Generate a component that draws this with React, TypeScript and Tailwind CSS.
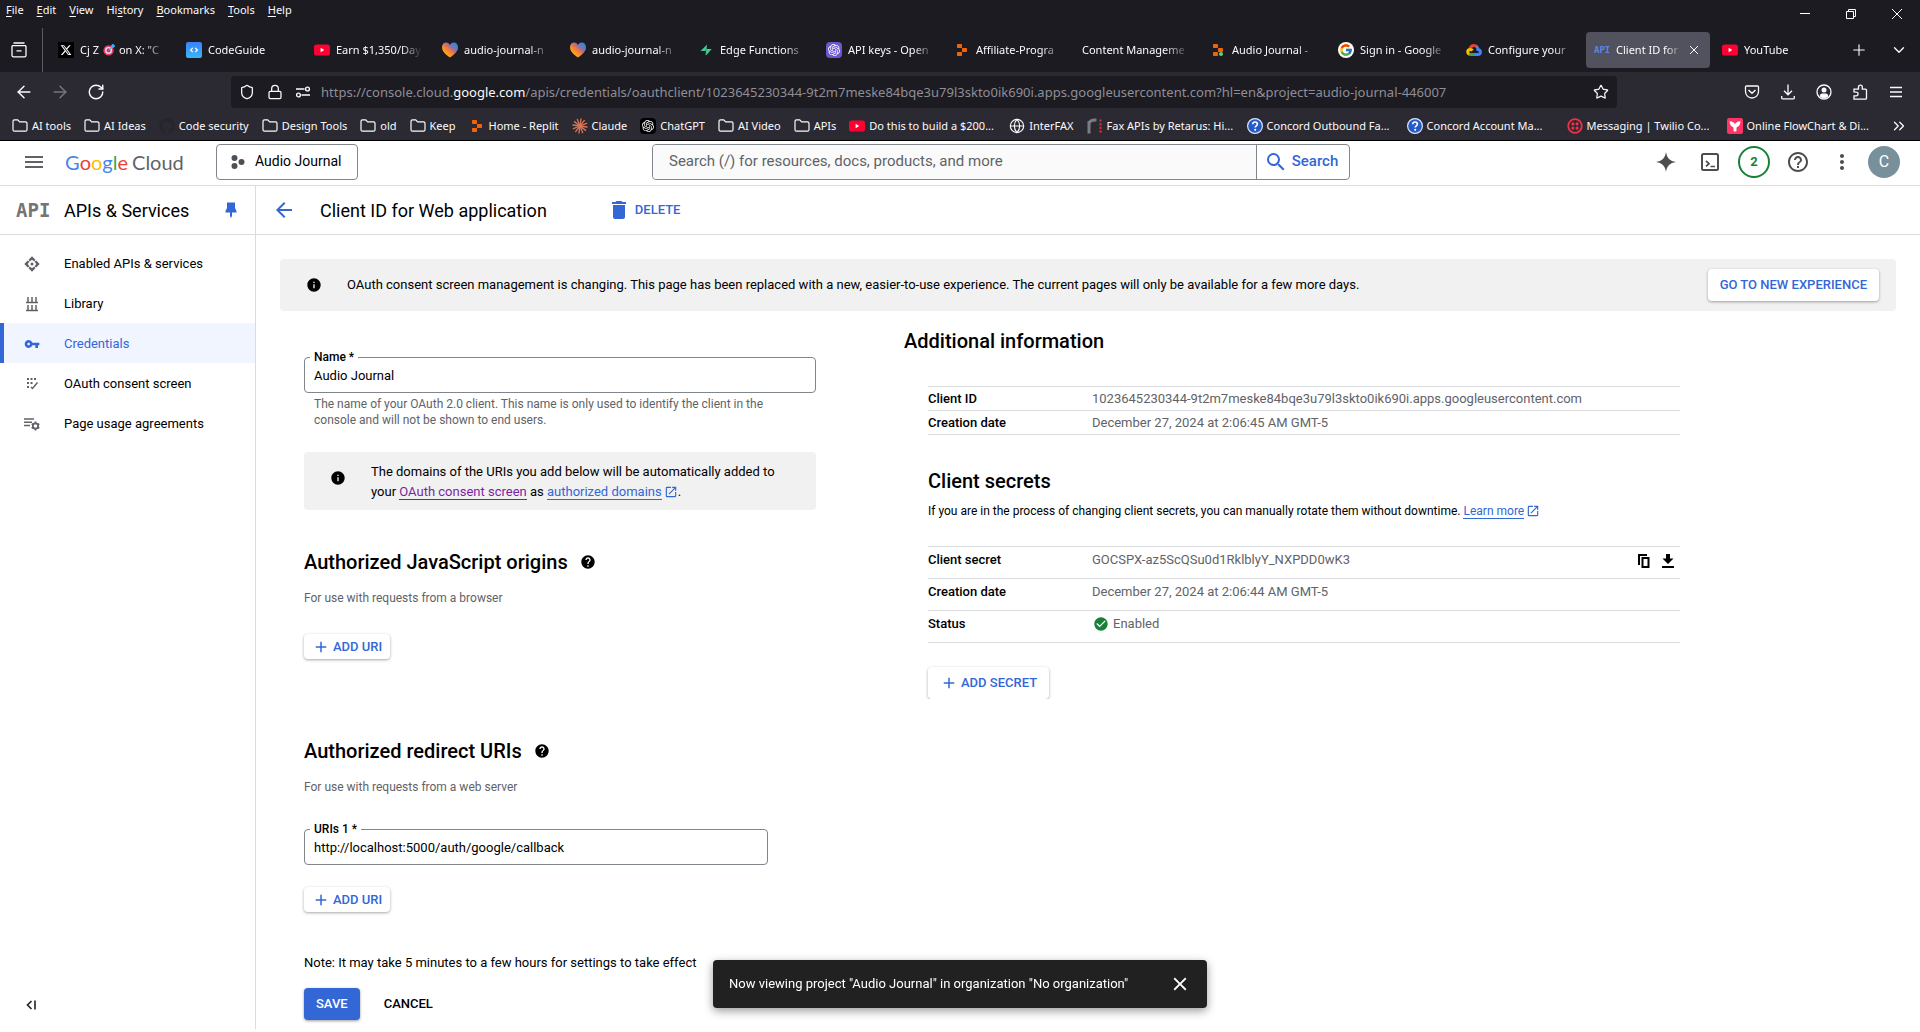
import React from 'react';
import { MdAdd, MdArrowBack, MdCheckCircle, MdClose, MdDelete, MdHelp, MdHelpOutline, MdInfo, MdMenu, MdMoreVert, MdOpenInNew, MdSearch, MdVpnKey } from 'react-icons/md';
import { FcGoogle } from 'react-icons/fc';
import { FaXTwitter } from 'react-icons/fa6';
import { FaGithub } from 'react-icons/fa';
import { SiOpenai, SiReplit } from 'react-icons/si';
import { ArrowLeft, ArrowRight, ChevronDown, ChevronsRight, Globe, Lock, Plus, RotateCw, Shield, Star } from 'lucide-react';

const chromeFont = "font-['Noto_Sans','Open_Sans',sans-serif]";
const pageFont = "font-['Roboto','Liberation_Sans',sans-serif]";

/* ---------- Favicons ---------- */

function YoutubeIcon() {
  return (
    <svg viewBox="0 0 16 16" className="size-4 shrink-0">
      <rect x="0" y="2.5" width="16" height="11" rx="2.6" fill="#ff0033" />
      <path d="M6.6 5.8v4.4L10.3 8z" fill="#fff" />
    </svg>
  );
}

function XIcon() {
  return (
    <span className="flex size-4 shrink-0 items-center justify-center bg-black">
      <FaXTwitter className="size-3 text-white" />
    </span>
  );
}

function CodeGuideIcon() {
  return (
    <svg viewBox="0 0 16 16" className="size-4 shrink-0">
      <defs>
        <linearGradient id="cg" x1="0" y1="0" x2="0" y2="1">
          <stop offset="0" stopColor="#3b82f6" />
          <stop offset="1" stopColor="#38b6f8" />
        </linearGradient>
      </defs>
      <rect width="16" height="16" rx="2" fill="url(#cg)" />
      <path d="M6.8 5.8 4.6 8l2.2 2.2M9.2 5.8 11.4 8l-2.2 2.2" fill="none" stroke="#fff" strokeWidth="1.2" />
    </svg>
  );
}

function HeartIcon() {
  return (
    <svg viewBox="0 0 16 16" className="size-4 shrink-0">
      <defs>
        <linearGradient id="heart" x1="0.1" y1="0.9" x2="0.85" y2="0.1">
          <stop offset="0.2" stopColor="#ffa51f" />
          <stop offset="0.5" stopColor="#f0763f" />
          <stop offset="0.72" stopColor="#8d6fa8" />
          <stop offset="1" stopColor="#2b8ad6" />
        </linearGradient>
      </defs>
      <path d="M8 15.6C3 12 0 9 0 5.2 0 2.5 1.900.6 4.300.6 6 .6 7.300 1.500 8 3 8.700 1.500 10 .6 11.700.6 14.100.6 16 2.500 16 5.200 16 9 13 12 8 15.600z" fill="url(#heart)" />
    </svg>
  );
}

function BoltIcon() {
  return (
    <svg viewBox="0 0 16 16" className="size-4 shrink-0">
      <path d="M9.200 2.500 2.500 9h5z" fill="#3ecf8e" />
      <path d="M7 13.500 13.600 7H8.500z" fill="#249361" />
      <path d="M8.600 2.500 8 13.500l5.600-6.500H9z" fill="#3ecf8e" />
    </svg>
  );
}

function OpenAiIcon({ dark = false }: { dark?: boolean }) {
  return (
    <span className={'flex size-4 shrink-0 items-center justify-center rounded ' + (dark ? 'bg-black' : 'bg-[#6e56cf]')}>
      <SiOpenai className="size-3 text-white" />
    </span>
  );
}

function ReplitIcon({ dot = false }: { dot?: boolean }) {
  if (!dot) return <span className="flex size-4 shrink-0 items-center justify-center"><SiReplit className="size-3 text-[#f26207]" /></span>;
  return (
    <svg viewBox="0 0 16 16" className="size-4 shrink-0">
      <rect x="3" y="2" width="5" height="4" rx="0.8" fill="#f26207" />
      <rect x="8" y="6" width="5" height="4" rx="0.8" fill="#f26207" />
      <rect x="3" y="10" width="5" height="4" rx="0.8" fill="#f26207" />
      <circle cx="11" cy="12" r="2" fill="#5bd66f" />
    </svg>
  );
}

function GoogleIcon() {
  return (
    <span className="flex size-4 shrink-0 items-center justify-center rounded-full bg-white">
      <FcGoogle className="size-3.5" />
    </span>
  );
}

function GcpIcon() {
  return (
    <svg viewBox="0 0 16 16" className="size-4 shrink-0" fill="none" strokeWidth="3">
      <path d="M4.200 6.200C4.800 4.300 6.300 3.400 8 3.400c1.200 0 2.200.5 3 1.300" stroke="#ea4335" />
      <path d="M10.600 4.500c.9.800 1.300 1.800 1.300 3 1.600.2 2.500 1.300 2.500 2.500 0 1.500-1.100 2.500-2.500 2.500H8" stroke="#4285f4" />
      <path d="M8.200 12.500H4.600c-.7 0-1.300-.2-1.800-.6" stroke="#34a853" />
      <path d="M3.200 12.200C2.200 11.700 1.700 11 1.700 10c0-1.600 1.200-2.500 2.700-2.500 1 0 1.700.4 2.200 1" stroke="#fbbc05" />
    </svg>
  );
}

function ApiTabIcon() {
  return <span className="w-4 shrink-0 font-['DejaVu_Sans_Mono',monospace] text-[9px] leading-4 font-bold text-[#5a86e8]">API</span>;
}

function FolderIcon() {
  return (
    <svg viewBox="0 0 16 16" className="size-4 shrink-0" fill="none" stroke="#fbfbfe" strokeWidth="1.200">
      <path d="M1 3.300c0-.9.600-1.500 1.500-1.500h3.200l2 2h5.800c.9 0 1.500.600 1.500 1.500v6.400c0 .9-.600 1.500-1.500 1.500h-11c-.9 0-1.500-.600-1.500-1.500z" />
    </svg>
  );
}

function ClaudeIcon() {
  const rays = [0, 30, 60, 90, 120, 150, 180, 210, 240, 270, 300, 330];
  return (
    <svg viewBox="0 0 16 16" className="size-4 shrink-0" stroke="#d97757" strokeWidth="1.300" strokeLinecap="round">
      {rays.map((a) => <path key={a} d="M8 8V0.900" transform={`rotate(${a + 8} 8 8)`} />)}
    </svg>
  );
}

function QuestionIcon() {
  return (
    <svg viewBox="0 0 16 16" className="size-4 shrink-0">
      <circle cx="8" cy="8" r="7.400" fill="#2359c9" stroke="#dbe6fb" strokeWidth="1.200" />
      <path d="M5.700 6.300C5.700 4.800 6.700 4 8 4s2.400.8 2.400 2.100c0 1.700-2.200 1.700-2.200 3.500" fill="none" stroke="#fff" strokeWidth="1.700" />
      <circle cx="8.200" cy="11.800" r="1.100" fill="#fff" />
    </svg>
  );
}

function TwilioIcon() {
  return (
    <svg viewBox="0 0 16 16" className="size-4 shrink-0">
      <circle cx="8" cy="8" r="6.800" fill="none" stroke="#f22f46" strokeWidth="1.800" />
      <circle cx="5.900" cy="5.900" r="1.600" fill="#f22f46" />
      <circle cx="10.100" cy="5.900" r="1.600" fill="#f22f46" />
      <circle cx="5.900" cy="10.100" r="1.600" fill="#f22f46" />
      <circle cx="10.100" cy="10.100" r="1.600" fill="#f22f46" />
    </svg>
  );
}

function FlowIcon() {
  return (
    <svg viewBox="0 0 16 16" className="size-4 shrink-0">
      <rect width="16" height="16" rx="2" fill="#ff3366" />
      <path d="M2.500 3.200c2.500 0 4.300 1 5.500 2.800 1.200-1.800 3-2.800 5.500-2.800 0 3-1.500 5.300-4 6.200V12.500c0 .6-.6 1-1.500 1s-1.500-.4-1.500-1V9.400c-2.500-.9-4-3.200-4-6.200z" fill="#fff" />
    </svg>
  );
}

function RetarusIcon() {
  return (
    <svg viewBox="0 0 16 16" className="size-4 shrink-0">
      <path d="M2 15.500V3M2 6.500C2 3 4.500 1.800 9.500 2" fill="none" stroke="#7b7b82" strokeWidth="3" />
      <circle cx="13.500" cy="2.500" r="1.300" fill="#c8283c" />
      <circle cx="13.500" cy="6.200" r="1.300" fill="#c8283c" />
      <circle cx="13.500" cy="9.900" r="1.300" fill="#c8283c" />
      <circle cx="13.500" cy="13.600" r="1.300" fill="#c8283c" />
    </svg>
  );
}

/* ---------- Browser chrome ---------- */

const menus: [string, string, string][] = [
  ['', 'F', 'ile'], ['', 'E', 'dit'], ['', 'V', 'iew'], ['Hi', 's', 'tory'], ['', 'B', 'ookmarks'], ['', 'T', 'ools'], ['', 'H', 'elp'],
];

function MenuBar() {
  return (
    <div className="flex h-7 items-start justify-between">
      <nav className="flex gap-px">
        {menus.map(([a, b, c]) => (
          <button key={b + c} className="px-1.5 text-[11px] leading-5">
            {a}<span className="underline underline-offset-2">{b}</span>{c}
          </button>
        ))}
      </nav>
      <div className="flex">
        <button aria-label="Minimize" className="flex h-7 w-[46px] items-center justify-center">
          <svg viewBox="0 0 10 10" className="size-2.5" stroke="#fff"><path d="M0 4.500h10" /></svg>
        </button>
        <button aria-label="Restore" className="flex h-7 w-[46px] items-center justify-center">
          <svg viewBox="0 0 10 10" className="size-2.5" stroke="#fff" fill="none"><path d="M.5 2.500h7v7h-7zM2.500 2.500v-2h7v7h-2" /></svg>
        </button>
        <button aria-label="Close window" className="flex h-7 w-[46px] items-center justify-center">
          <svg viewBox="0 0 10 10" className="size-2.5" stroke="#fff"><path d="M0 0l10 10M10 0 0 10" /></svg>
        </button>
      </div>
    </div>
  );
}

const tabs: { label: React.ReactNode; icon?: React.ReactNode; active?: boolean }[] = [
  {
    label: (
      <span className="inline-flex items-center gap-1">
        Cj Z
        <svg viewBox="0 0 14 14" className="size-3">
          <circle cx="6.500" cy="7.500" r="6" fill="#e0416b" />
          <circle cx="6.500" cy="7.500" r="4" fill="#f4dfe6" />
          <circle cx="6.500" cy="7.500" r="2.400" fill="#d8315b" />
          <path d="M6.500 7.500 10 4l0-2.500L12 0v2h2l-1.700 2H10" stroke="#35b7f1" fill="#35b7f1" />
        </svg>
        on X: "C
      </span>
    ),
    icon: <XIcon />,
  },
  { label: 'CodeGuide', icon: <CodeGuideIcon /> },
  { label: 'Earn $1,350/Day', icon: <YoutubeIcon /> },
  { label: 'audio-journal-n', icon: <HeartIcon /> },
  { label: 'audio-journal-n', icon: <HeartIcon /> },
  { label: 'Edge Functions', icon: <BoltIcon /> },
  { label: 'API keys - Open', icon: <OpenAiIcon /> },
  { label: 'Affiliate-Progra', icon: <ReplitIcon /> },
  { label: 'Content Manageme' },
  { label: 'Audio Journal -', icon: <ReplitIcon dot /> },
  { label: 'Sign in - Google', icon: <GoogleIcon /> },
  { label: 'Configure your', icon: <GcpIcon /> },
  { label: 'Client ID for', icon: <ApiTabIcon />, active: true },
  { label: 'YouTube', icon: <YoutubeIcon /> },
];

function TabStrip() {
  return (
    <div className="flex h-11 items-stretch">
      <div className="mr-[5px] flex w-[43px] shrink-0 items-center justify-center border-r border-[#5b5b66]">
        <button aria-label="Firefox View" className="pr-1">
          <svg viewBox="0 0 16 16" className="size-4" fill="none" stroke="#fbfbfe" strokeWidth="1.300">
            <path d="M2.500 1h11M1 3.700h14" />
            <path d="M1 3.700v9.600c0 .9.700 1.600 1.600 1.600h10.800c.9 0 1.600-.7 1.600-1.600V3.700M5.500 8.800h5" />
          </svg>
        </button>
      </div>
      <div className="flex min-w-0 flex-1">
        {tabs.map((t, i) => (
          <div key={i} className="flex w-32 min-w-0 items-center px-0.5">
            <div className={'flex h-9 w-full min-w-0 items-center rounded pl-2 ' + (t.active ? 'bg-[#52525e] pr-3' : 'pr-2')}>
              <button className="flex min-w-0 flex-1 items-center gap-1.5 text-left text-[11px]">
                {t.icon}
                <span className="min-w-0 flex-1 overflow-hidden whitespace-nowrap [mask-image:linear-gradient(to_right,black_76%,transparent)]">{t.label}</span>
              </button>
              {t.active && (
                <button aria-label="Close tab" className="ml-2">
                  <svg viewBox="0 0 8 8" className="size-2" stroke="#fbfbfe"><path d="M0 0l8 8M8 0 0 8" /></svg>
                </button>
              )}
            </div>
          </div>
        ))}
      </div>
      <button aria-label="New tab" className="flex w-[38px] items-center justify-center"><Plus className="size-[18px]" strokeWidth={1.5} /></button>
      <button aria-label="List all tabs" className="flex w-[42px] items-center justify-center"><ChevronDown className="size-[18px]" strokeWidth={1.8} /></button>
    </div>
  );
}

function ToolButton({ label, dim, children }: { label: string; dim?: boolean; children: React.ReactNode }) {
  return <button aria-label={label} className={'flex size-9 items-center justify-center ' + (dim ? 'text-[#77767d]' : '')}>{children}</button>;
}

function NavBar() {
  return (
    <div className="flex h-10 items-center gap-[117px] bg-[#2b2a33] px-1.5">
      <div className="flex shrink-0">
        <ToolButton label="Back"><ArrowLeft className="size-5" strokeWidth={1.7} /></ToolButton>
        <ToolButton label="Forward" dim><ArrowRight className="size-5" strokeWidth={1.7} /></ToolButton>
        <ToolButton label="Reload"><RotateCw className="size-[18px]" strokeWidth={1.9} /></ToolButton>
      </div>
      <div className="flex h-8 min-w-0 flex-1 items-center rounded bg-[#1c1b22]">
        <Shield className="ml-2 size-4 shrink-0" strokeWidth={1.9} />
        <Lock className="ml-3 size-4 shrink-0" strokeWidth={1.9} />
        <svg viewBox="0 0 16 16" className="ml-3 size-4 shrink-0" fill="none" stroke="#fbfbfe" strokeWidth="1.400">
          <path d="M1 5h8.500M6.500 11H15" /><circle cx="12.500" cy="5" r="1.900" /><circle cx="3.500" cy="11" r="1.900" />
        </svg>
        <div className="ml-2.5 min-w-0 flex-1 overflow-hidden pt-0.5 text-[13px] whitespace-nowrap text-[#8f8e96]">
          https://console.cloud.<span className="text-[#fbfbfe]">google.com</span>/apis/credentials/oauthclient/1023645230344-9t2m7meske84bqe3u79l3skto0ik690i.apps.googleusercontent.com?hl=en&amp;project=audio-journal-446007
        </div>
        <button aria-label="Bookmark this page" className="mr-2"><Star className="size-4" strokeWidth={1.8} /></button>
      </div>
      <div className="flex shrink-0">
        <ToolButton label="Save to Pocket">
          <svg viewBox="0 0 16 16" className="size-4" fill="none" stroke="currentColor" strokeWidth="1.300">
            <path d="M2.500 2h11c.6 0 1 .4 1 1v4.500a6.500 6.500 0 0 1-13 0V3c0-.6.4-1 1-1z" /><path d="M4.500 6 8 9.300 11.500 6" strokeWidth="1.500" />
          </svg>
        </ToolButton>
        <ToolButton label="Downloads">
          <svg viewBox="0 0 16 16" className="size-4" fill="none" stroke="currentColor" strokeWidth="1.300">
            <path d="M8 .5v10M4 6.800l4 4 4-4M1.700 12v1.700c0 .7.500 1.200 1.200 1.200h10.200c.7 0 1.200-.5 1.200-1.200V12" />
          </svg>
        </ToolButton>
        <ToolButton label="Account">
          <svg viewBox="0 0 16 16" className="size-4" fill="none" stroke="currentColor" strokeWidth="1.300">
            <circle cx="8" cy="8" r="7" /><circle cx="8" cy="6" r="2.500" fill="currentColor" stroke="none" /><path d="M3.700 12.500c0-2 1.300-3 2.300-3h4c1 0 2.300 1 2.300 3-1.200 1-2.700 1.500-4.300 1.500s-3.100-.5-4.300-1.500z" fill="currentColor" stroke="none" />
          </svg>
        </ToolButton>
        <ToolButton label="Extensions">
          <svg viewBox="0 0 16 16" className="size-4" fill="none" stroke="currentColor" strokeWidth="1.300">
            <path d="M2 8V5.200h4.500V3a1.900 1.900 0 0 1 3.800 0v2.200h3.200c.6 0 1 .4 1 1v8c0 .6-.4 1-1 1H2v-3.400h2.300a1.800 1.800 0 0 0 0-3.600z" />
          </svg>
        </ToolButton>
        <ToolButton label="Open application menu">
          <svg viewBox="0 0 16 16" className="size-4" stroke="currentColor" strokeWidth="1.300"><path d="M2 3.500h12M2 8h12M2 12.500h12" /></svg>
        </ToolButton>
      </div>
    </div>
  );
}

const bookmarks: [string, React.ReactNode][] = [
  ['AI tools', <FolderIcon />],
  ['AI Ideas', <FolderIcon />],
  ['Code security', <FaGithub className="size-4 shrink-0 text-[#24262b]" />],
  ['Design Tools', <FolderIcon />],
  ['old', <FolderIcon />],
  ['Keep', <FolderIcon />],
  ['Home - Replit', <ReplitIcon />],
  ['Claude', <ClaudeIcon />],
  ['ChatGPT', <OpenAiIcon dark />],
  ['AI Video', <FolderIcon />],
  ['APIs', <FolderIcon />],
  ['Do this to build a $200...', <YoutubeIcon />],
  ['InterFAX', <Globe className="size-4 shrink-0" strokeWidth={1.7} />],
  ['Fax APIs by Retarus: Hi...', <RetarusIcon />],
  ['Concord Outbound Fa...', <QuestionIcon />],
  ['Concord Account Ma...', <QuestionIcon />],
  ['Messaging | Twilio Co...', <TwilioIcon />],
  ['Online FlowChart & Di...', <FlowIcon />],
];

function BookmarksBar() {
  return (
    <div className="flex h-[29px] items-center justify-between border-b border-black bg-[#2b2a33] px-3">
      <nav className="flex min-w-0 flex-1 items-center gap-[13px] overflow-hidden">
        {bookmarks.map(([label, icon]) => (
          <a key={label} href="#" className="flex shrink-0 items-center gap-1 text-[11px] leading-6 whitespace-nowrap">
            {icon}
            <span className={label.endsWith('...') ? 'w-[127px]' : ''}>{label}</span>
          </a>
        ))}
      </nav>
      <button aria-label="More bookmarks"><ChevronsRight className="size-[18px]" strokeWidth={1.7} /></button>
    </div>
  );
}

/* ---------- Console ---------- */

function ConsoleHeader() {
  return (
    <header className="flex h-[45px] items-center justify-between border-b border-[#dadce0] pb-[3px]">
      <div className="flex shrink-0 items-center">
        <button aria-label="Navigation menu" className="ml-[22px]"><MdMenu className="size-6 text-[#5f6368]" /></button>
        <a href="#" aria-label="Google Cloud" className="ml-[19px] flex w-[120px] font-['Lato',sans-serif] text-[20px] leading-6 whitespace-nowrap">
          <span className="text-[#4285f4]">G</span><span className="text-[#ea4335]">o</span><span className="text-[#fbbc04]">o</span><span className="text-[#4285f4]">g</span><span className="text-[#34a853]">l</span><span className="text-[#ea4335]">e</span>
          <span className="ml-1 text-[#5f6368]">Cloud</span>
        </a>
        <button className="ml-[31px] flex h-9 w-[142px] items-center rounded border border-[#80868b] text-[14px]">
          <svg viewBox="0 0 14 14" className="mr-2.5 ml-3.5 size-3.5" fill="#4d5156"><circle cx="3.500" cy="3" r="3" /><circle cx="3.500" cy="11" r="3" /><circle cx="10.500" cy="7" r="3" /></svg>
          Audio Journal
        </button>
      </div>
      <form className="flex h-9 w-[698px] rounded border border-[#80868b]">
        <input aria-label="Search" placeholder="Search (/) for resources, docs, products, and more" className="min-w-0 flex-1 rounded-l bg-[#fafafa] px-4 text-[15px] placeholder:text-[#5f6368]" />
        <button type="button" className="flex w-[93px] items-center justify-center gap-1 border-l border-[#80868b] pr-1 text-[15px] font-medium text-[#3367d6]">
          <MdSearch className="size-6" />Search
        </button>
      </form>
      <div className="flex shrink-0 items-center gap-3 pr-5 pl-1.5">
        <button aria-label="Gemini" className="flex size-8 items-center justify-center">
          <svg viewBox="0 0 20 20" className="size-5" fill="#4d4d4d"><path d="M10 0c.8 6 4 9.200 10 10-6 .8-9.200 4-10 10-.8-6-4-9.200-10-10 6-.8 9.200-4 10-10z" /></svg>
        </button>
        <button aria-label="Cloud Shell" className="flex size-8 items-center justify-center">
          <svg viewBox="0 0 18 18" className="size-[18px]" fill="none" stroke="#4d4d4d" strokeWidth="2"><rect x="1" y="1" width="16" height="16" rx="1.500" /><path d="M5 8l3 2.700L5 13.400M9.500 13.500H14" strokeWidth="1.700" /></svg>
        </button>
        <button aria-label="2 notifications" className="flex size-8 items-center justify-center rounded-full border-2 border-[#188038] text-[13px] font-bold text-[#188038]">2</button>
        <button aria-label="Help" className="flex size-8 items-center justify-center"><MdHelpOutline className="size-6 text-[#4d4d4d]" /></button>
        <button aria-label="More options" className="flex size-8 items-center justify-center"><MdMoreVert className="size-6 text-[#4d4d4d]" /></button>
        <button aria-label="Account" className="-ml-0.5 flex size-8 items-center justify-center rounded-full bg-[#78909c] text-[16px] text-white">C</button>
      </div>
    </header>
  );
}

const navItems: { label: string; icon: React.ReactNode; active?: boolean }[] = [
  {
    label: 'Enabled APIs & services',
    icon: (
      <svg viewBox="0 0 16 16" className="size-4" fill="currentColor">
        <circle cx="8" cy="8" r="1.500" />
        <path d="M8 .3 11.400 3.700 10.200 5.500 8 3.700 5.800 5.500 4.600 3.700zM8 15.700l3.400-3.400-1.200-1.800L8 12.300l-2.200-1.800-1.200 1.800zM.3 8l3.400-3.400 1.800 1.200L3.700 8l1.800 2.200-1.800 1.200zM15.700 8l-3.400-3.400-1.800 1.200L12.300 8l-1.800 2.200 1.800 1.200z" />
      </svg>
    ),
  },
  {
    label: 'Library',
    icon: (
      <svg viewBox="0 0 16 16" className="size-4" fill="none" stroke="currentColor" strokeWidth="1.500">
        <path d="M2 6.500h12M4 1v5.500M8 1v5.500M12 1v5.500M2 14.500h12M4 9v5.500M8 9v5.500M12 9v5.500" />
      </svg>
    ),
  },
  { label: 'Credentials', icon: <MdVpnKey className="size-4" />, active: true },
  {
    label: 'OAuth consent screen',
    icon: (
      <svg viewBox="0 0 16 16" className="size-4" fill="currentColor">
        <path d="M3 2h2v2H3zM6.500 2h2v2h-2zM10 2h2v2h-2zM3 6h2v2H3zM6.500 6h2v2h-2zM3 10h2v2H3z" />
        <path d="M13.500 6.500 8.500 12.500l-1.500-1.500" fill="none" stroke="currentColor" strokeWidth="1.500" />
      </svg>
    ),
  },
  {
    label: 'Page usage agreements',
    icon: (
      <svg viewBox="0 0 16 16" className="size-4" fill="none" stroke="currentColor" strokeWidth="1.500">
        <path d="M0 3h10M0 6.200h8M0 9.400h6" />
        <circle cx="11.500" cy="10" r="2.700" strokeWidth="1.800" />
        <path d="M11.500 5.600v1.600M11.500 12.800v1.600M7.700 7.800l1.400.8M13.900 11.400l1.400.8M7.700 12.200l1.400-.8M13.900 8.600l1.400-.8" strokeWidth="1.800" />
      </svg>
    ),
  },
];

function Sidebar() {
  return (
    <aside className="flex w-64 shrink-0 flex-col border-r border-[#dadce0]">
      <div className="flex h-[49px] items-center border-b border-[#dadce0] px-4">
        <span className="w-12 font-['DejaVu_Sans_Mono',monospace] text-[19px] leading-6 font-bold text-[#757575]">API</span>
        <h2 className="flex-1 text-[18px]">APIs &amp; Services</h2>
        <button aria-label="Unpin menu">
          <svg viewBox="0 0 16 16" className="size-4 text-[#3367d6]" fill="currentColor"><path d="M4 .5h8v5.500l1.500 3v1.500H9V14l-1 2-1-2v-3.500H2.500V9L4 6z" /></svg>
        </button>
      </div>
      <nav className="flex flex-1 flex-col pt-2">
        {navItems.map((n) => (
          <a key={n.label} href="#" className={'flex h-10 items-center gap-6 border-l-4 pt-px pl-5 text-[13px] ' + (n.active ? 'border-[#3367d6] bg-[#f0f5ff] text-[#3367d6]' : 'border-transparent text-black')}>
            <span className={n.active ? 'text-[#3367d6]' : 'text-[#5f6368]'}>{n.icon}</span>
            {n.label}
          </a>
        ))}
      </nav>
      <button aria-label="Hide navigation menu" className="mb-4 ml-6 flex size-4 items-center justify-center">
        <svg viewBox="0 0 16 16" className="size-4" fill="none" stroke="#202124" strokeWidth="1.600"><path d="M7.500 4 3.500 8l4 4M11 3.500v9" /></svg>
      </button>
    </aside>
  );
}

function Field({ id, label, value, className }: { id: string; label: string; value: string; className: string }) {
  return (
    <div className={'relative ' + className}>
      <label htmlFor={id} className="absolute -top-2 left-1.5 bg-white px-1 text-[12px] leading-4 font-medium">{label}</label>
      <input id={id} defaultValue={value} className="h-9 w-full rounded border border-[#80868b] px-[9px] text-[13px]" />
    </div>
  );
}

const raised = 'flex items-center rounded bg-white text-[13px] font-medium text-[#3367d6] shadow-[0_1px_3px_rgba(0,0,0,0.35)]';

function ExternalIcon() {
  return <MdOpenInNew className="mb-0.5 ml-0.5 inline size-3.5 text-[#3367d6]" />;
}

function SectionTitle({ children, help }: { children: React.ReactNode; help: string }) {
  return (
    <h3 className="flex items-center gap-3 text-[20px] leading-6 font-medium">
      {children}
      <button type="button" aria-label={help}><MdHelp className="size-4" /></button>
    </h3>
  );
}

function AddUri() {
  return <button type="button" className={raised + ' h-[25px] gap-[3px] px-2'}><MdAdd className="size-[18px]" />ADD URI</button>;
}

function ClientForm() {
  return (
    <form className="flex w-[600px] shrink-0 flex-col items-start pt-[46px] pb-2">
      <Field id="client-name" label="Name *" value="Audio Journal" className="w-[512px]" />
      <p className="mt-[3px] ml-2.5 w-[480px] text-[12px] leading-4 text-[#5f6368]">The name of your OAuth 2.0 client. This name is only used to identify the client in the console and will not be shown to end users.</p>
      <div className="mt-6 flex w-[512px] rounded bg-[#f1f1f1] pt-2.5 pr-8 pb-2 pl-[26px] text-[13px] leading-5">
        <MdInfo className="mt-2 mr-[25px] size-4 shrink-0" />
        <p>
          The domains of the URIs you add below will be automatically added to your{' '}
          <a href="#" className="border-b border-[#7b1fa2] text-[#7b1fa2]">OAuth consent screen</a> as{' '}
          <a href="#" className="border-b border-[#3367d6] text-[#3367d6]">authorized domains</a><ExternalIcon />.
        </p>
      </div>
      <div className="mt-10"><SectionTitle help="About JavaScript origins">Authorized JavaScript origins</SectionTitle></div>
      <p className="mt-4 mb-7 text-[12px] leading-4 text-[#5f6368]">For use with requests from a browser</p>
      <AddUri />
      <div className="mt-20"><SectionTitle help="About redirect URIs">Authorized redirect URIs</SectionTitle></div>
      <p className="mt-4 mb-[34px] text-[12px] leading-4 text-[#5f6368]">For use with requests from a web server</p>
      <Field id="uri-1" label="URIs 1 *" value="http://localhost:5000/auth/google/callback" className="mb-[22px] w-[464px]" />
      <AddUri />
      <p className="mt-[41px] text-[13px] leading-5">Note: It may take 5 minutes to a few hours for settings to take effect</p>
      <div className="mt-[15px] flex gap-3 text-[13px] font-medium">
        <button type="button" className="h-8 rounded bg-[#3367d6] px-3 text-white shadow-[0_1px_3px_rgba(0,0,0,0.4)]">SAVE</button>
        <button type="button" className="h-8 px-3">CANCEL</button>
      </div>
    </form>
  );
}

function Row({ name, tall, children }: { name: string; tall?: boolean; children: React.ReactNode }) {
  return (
    <tr className={'border-y border-[#dadce0] ' + (tall ? 'h-8 align-top leading-[26px]' : 'h-6 leading-[23px]')}>
      <th scope="row" className="w-[164px] p-0 text-left font-medium">{name}</th>
      <td className="p-0 text-[#5f6368]">{children}</td>
    </tr>
  );
}

function AdditionalInfo() {
  return (
    <section className="min-w-0 flex-1 pt-[18px] pr-6">
      <h3 className="text-[20px] leading-6 font-medium">Additional information</h3>
      <div className="ml-6 max-w-[752px]">
        <table className="mt-[33px] w-full border-collapse text-[13px]">
          <tbody>
            <Row name="Client ID">1023645230344-9t2m7meske84bqe3u79l3skto0ik690i.apps.googleusercontent.com</Row>
            <Row name="Creation date">December 27, 2024 at 2:06:45 AM GMT-5</Row>
          </tbody>
        </table>
        <h3 className="mt-[34px] text-[20px] leading-6 font-medium">Client secrets</h3>
        <p className="mt-2.5 text-[12px] leading-4">
          If you are in the process of changing client secrets, you can manually rotate them without downtime.{' '}
          <a href="#" className="border-b border-[#3367d6] text-[#3367d6]">Learn more</a><ExternalIcon />
        </p>
        <table className="mt-[26px] w-full border-collapse text-[13px]">
          <tbody>
            <Row name="Client secret" tall>
              <div className="flex items-center justify-between">
                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
                <span className="flex gap-2 pt-0.5 pr-1 text-black">
                  <button aria-label="Copy client secret">
                    <svg viewBox="0 0 16 16" className="size-4" fill="none" stroke="currentColor" strokeWidth="2"><path d="M3 12V2h8" /><path d="M6.500 5h6v9h-6z" /></svg>
                  </button>
                  <button aria-label="Download client secret">
                    <svg viewBox="0 0 16 16" className="size-4" fill="currentColor"><path d="M6 1h4v4.500h3.500L8 11 2.500 5.500H6zM2 13h12v2H2z" /></svg>
                  </button>
                </span>
              </div>
            </Row>
            <Row name="Creation date" tall>December 27, 2024 at 2:06:44 AM GMT-5</Row>
            <Row name="Status" tall>
              <span className="flex items-center gap-1"><MdCheckCircle className="ml-px size-4 text-[#188038]" />Enabled</span>
            </Row>
          </tbody>
        </table>
        <div className="-mx-1 mt-5 overflow-hidden px-1 pt-1">
          <button type="button" className={raised + ' h-8 gap-[3px] px-3'}><MdAdd className="size-[18px]" />ADD SECRET</button>
        </div>
      </div>
    </section>
  );
}

function Toast() {
  return (
    <div role="status" className="fixed bottom-6 left-1/2 flex h-12 w-[494px] -translate-x-1/2 items-center justify-between rounded bg-[#212121] px-4 text-[13px] text-white shadow-[0_3px_10px_rgba(0,0,0,0.4)]">
      Now viewing project "Audio Journal" in organization "No organization"
      <button aria-label="Dismiss"><MdClose className="size-[22px]" /></button>
    </div>
  );
}

export default function App() {
  return (
    <div className="flex min-h-screen flex-col bg-white pb-[3px]">
      <div className={chromeFont + ' bg-[#1c1b22] text-[#fbfbfe]'}>
        <MenuBar />
        <TabStrip />
        <NavBar />
        <BookmarksBar />
      </div>
      <div className={pageFont + ' flex flex-1 flex-col text-black'}>
        <ConsoleHeader />
        <div className="flex flex-1">
          <Sidebar />
          <main className="flex min-w-0 flex-1 flex-col">
            <div className="flex h-[49px] items-center border-b border-[#dadce0] pl-4">
              <button aria-label="Back to credentials"><MdArrowBack className="size-6 text-[#3367d6]" /></button>
              <h1 className="ml-6 text-[18px]">Client ID for Web application</h1>
              <button className="ml-[60px] flex items-center gap-1 text-[13px] font-medium text-[#3367d6]"><MdDelete className="size-6" />DELETE</button>
            </div>
            <div className="mx-6 mt-6 flex h-[52px] items-center rounded bg-[#f1f1f1] pr-[17px] pl-[26px] text-[13px]">
              <MdInfo className="size-4" />
              <p className="ml-[25px] flex-1">OAuth consent screen management is changing. This page has been replaced with a new, easier-to-use experience. The current pages will only be available for a few more days.</p>
              <button className={raised + ' h-8 px-3'}>GO TO NEW EXPERIENCE</button>
            </div>
            <div className="flex pl-12">
              <ClientForm />
              <AdditionalInfo />
            </div>
          </main>
        </div>
      </div>
      <div className={pageFont}><Toast /></div>
    </div>
  );
}
